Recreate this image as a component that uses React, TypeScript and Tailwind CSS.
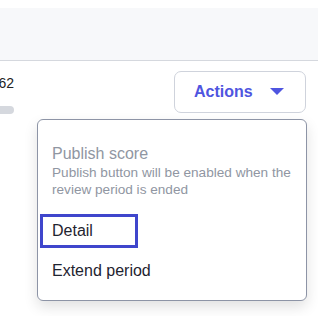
export default function App() {
  return (
    <div className="relative h-[316px] w-[318px] overflow-hidden bg-white font-['Liberation_Sans',Arial,sans-serif]">
      <div className="mt-2 h-[53px] border-b border-[#d5d8de] bg-[#f7f8fa]" />
      <div className="flex items-start justify-between pr-[12px]">
        <div className="flex w-[14px] flex-col items-end overflow-hidden pt-[14px]">
          <span className="text-[14px] leading-[17px] text-[#222]">262</span>
          <div className="mt-[14px] h-[8px] w-[30px] shrink-0 rounded-full bg-[#d5d8de]" />
        </div>
        <button className="mt-[10px] flex h-[42px] w-[132px] items-center gap-[17px] rounded-[7px] border border-[#cfd3dc] bg-white pl-[19px] text-[16px] font-bold text-[#4f55e0]">
          Actions
          <svg width="14" height="8" viewBox="0 0 14 8">
            <path d="M0 0h14L7 7z" fill="#4f55e0" />
          </svg>
        </button>
      </div>
      <div className="absolute left-[37px] top-[119px] h-[182px] w-[270px] rounded-[6px] border border-[#8d94a6] bg-white shadow-[0_6px_14px_rgba(0,0,0,0.12)]">
        <div className="pl-[14px] pr-[6px] pt-[24px] text-[#9096a2]">
          <div className="text-[16px] leading-[20px]">Publish score</div>
          <div className="text-[13.6px] leading-[17px]">
            Publish button will be enabled when the review period is ended
          </div>
        </div>
        <div className="ml-[2px] mt-[16px] flex h-[34px] w-[98px] items-center border-[3px] border-[#3f46cc] pl-[9px] text-[16px] text-[#1f2430]">
          Detail
        </div>
        <div className="mt-[13px] pl-[14px] text-[16px] leading-[20px] text-[#1f2430]">Extend period</div>
      </div>
    </div>
  );
}
